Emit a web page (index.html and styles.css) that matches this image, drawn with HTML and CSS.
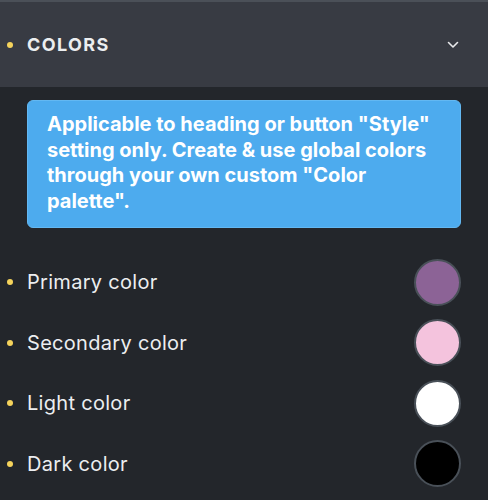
FILE: index.html
```html
<!DOCTYPE html>
<html lang="en">
<head>
    <meta charset="UTF-8">
    <meta name="viewport" content="width=device-width, initial-scale=1.0">
    <title>Colors</title>
    <link rel="stylesheet" href="styles.css">
</head>
<body>
    <div class="panel">
        <div class="panel-header">
            <span class="dot"></span>
            <span class="panel-title">COLORS</span>
            <svg class="chevron" width="12" height="8" viewBox="0 0 12 8">
                <path d="M1.5 1.5 L6 6 L10.5 1.5" fill="none" stroke="#e8e9eb" stroke-width="1.6" stroke-linecap="round" stroke-linejoin="round"/>
            </svg>
        </div>

        <div class="panel-body">
            <div class="info">
                Applicable to heading or button "Style" setting only. Create &amp; use global colors through your own custom "Color palette".
            </div>

            <div class="row">
                <span class="dot"></span>
                <span class="label">Primary color</span>
                <span class="swatch primary"></span>
            </div>
            <div class="row">
                <span class="dot"></span>
                <span class="label">Secondary color</span>
                <span class="swatch secondary"></span>
            </div>
            <div class="row">
                <span class="dot"></span>
                <span class="label">Light color</span>
                <span class="swatch light"></span>
            </div>
            <div class="row">
                <span class="dot"></span>
                <span class="label">Dark color</span>
                <span class="swatch dark"></span>
            </div>
        </div>
    </div>
</body>
</html>
```

FILE: styles.css
```css
body {
    margin: 0;
    background-color: #23262b;
    font-family: Inter, 'Noto Sans', sans-serif;
    color: #eceef0;
}
.panel {
    width: 488px;
}
.panel-header {
    display: flex;
    align-items: center;
    height: 85px;
    background-color: #383b43;
    border-top: 2px solid #4b5058;
    padding: 0 29px 0 7px;
    box-sizing: content-box;
}
.dot {
    width: 6px;
    height: 6px;
    border-radius: 50%;
    background-color: #f5d35c;
    flex-shrink: 0;
}
.panel-title {
    margin-left: 14px;
    font-size: 18px;
    font-weight: 700;
    letter-spacing: 1.4px;
    flex: 1;
}
.chevron {
    display: block;
}
.panel-body {
    padding: 13px 27px 0 7px;
}
.info {
    margin-left: 20px;
    background-color: #4dabee;
    border: 1px solid #63b8f2;
    border-radius: 6px;
    padding: 11px 18px 13px 19px;
    color: #fff;
    font-size: 20px;
    font-weight: 700;
    line-height: 25.5px;
    margin-bottom: 24px;
}
.row {
    display: flex;
    align-items: center;
    height: 60.5px;
}
.label {
    margin-left: 14px;
    font-size: 20px;
    letter-spacing: 0.3px;
    flex: 1;
}
.swatch {
    width: 43px;
    height: 43px;
    border-radius: 50%;
    border: 2px solid #495058;
}
.primary {
    background-color: #8c6396;
}
.secondary {
    background-color: #f4c3dd;
}
.light {
    background-color: #ffffff;
}
.dark {
    background-color: #000000;
}
```
